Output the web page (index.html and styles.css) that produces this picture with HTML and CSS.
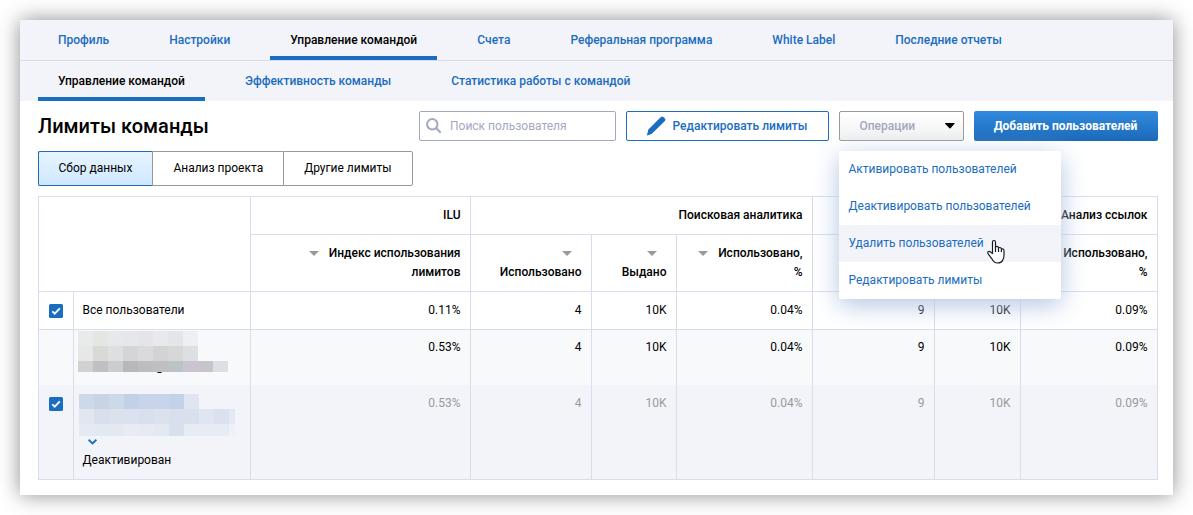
FILE: index.html
```html
<!DOCTYPE html>
<html lang="ru">
<head>
<meta charset="utf-8">
<title>Лимиты команды</title>
<link rel="stylesheet" href="styles.css">
</head>
<body>
<main class="card">
  <nav class="tabs tabs-main">
    <a class="tab">Профиль</a><a class="tab">Настройки</a><a class="tab active">Управление командой</a><a class="tab">Счета</a><a class="tab">Реферальная программа</a><a class="tab">White Label</a><a class="tab">Последние отчеты</a>
  </nav>
  <nav class="tabs tabs-sub">
    <a class="tab active">Управление командой</a><a class="tab">Эффективность команды</a><a class="tab">Статистика работы с командой</a>
  </nav>
  <section class="content">
    <header class="toolbar">
      <h1 class="title">Лимиты команды</h1>
      <div class="search">
        <svg class="search-icon" width="16" height="16" viewBox="0 0 16 16"><circle cx="6.3" cy="6.3" r="5.2"/><path d="M10 10l4.7 4.7"/></svg>
        <span>Поиск пользователя</span>
      </div>
      <div class="btn btn-outline">
        <svg class="pencil" width="20" height="20" viewBox="0 0 20 20"><path d="M.8 19.4L2.4 13.600 12.400 3.600 15 1Q16.200.1 17.400 1L19 2.600Q19.900 3.800 18.900 5L16.400 7.600 6.300 17.200Q3.500 18.900.8 19.400z"/></svg>
        <span>Редактировать лимиты</span>
      </div>
      <div class="dropdown">
        <div class="btn btn-select"><span>Операции</span><svg width="10" height="6" viewBox="0 0 10 6"><path d="M0 .5Q0 0 .5 0H9.500Q10 0 9.700.6L5.500 5.200Q5 5.600 4.500 5.200L.3.9z"/></svg></div>
        <div class="menu">
          <div class="menu-item">Активировать пользователей</div>
          <div class="menu-item">Деактивировать пользователей</div>
          <div class="menu-item hover">Удалить пользователей</div>
          <div class="menu-item">Редактировать лимиты</div>
          <svg class="cursor" width="20" height="25" viewBox="0 0 20 25"><path d="M6.500 14.500V3.200Q6.500 1.500 8 1.500T9.500 3.200V8.500Q9.700 7.300 11 7.300T12.500 8.800V9.400Q12.900 8.400 14 8.500T15.400 10V10.600Q15.800 9.700 16.800 9.900T18 11.500V16.500Q18 19 16.900 20.500 16 24 11.500 24 8 24 5.900 19.800L2.200 14.900Q1.200 13.400 2.200 12.600T4.600 13z"/><path d="M9.500 8.500V13M12.500 9.500V13M15.400 10.500V13"/></svg>
        </div>
      </div>
      <div class="btn btn-primary">Добавить пользователей</div>
    </header>
    <div class="segments">
      <div class="segment selected">Сбор данных</div><div class="segment">Анализ проекта</div><div class="segment">Другие лимиты</div>
    </div>
    <table class="limits">
      <colgroup><col class="c-check"><col class="c-user"><col class="c-ilu"><col class="c-a1"><col class="c-a2"><col class="c-a3"><col class="c-b1"><col class="c-b2"><col class="c-b3"></colgroup>
      <thead>
        <tr class="groups"><th colspan="2" rowspan="2"></th><th>ILU</th><th colspan="3">Поисковая аналитика</th><th colspan="3">Анализ ссылок</th></tr>
        <tr class="heads">
          <th><i class="sort"></i>Индекс использования лимитов</th>
          <th><i class="sort"></i><br>Использовано</th>
          <th><i class="sort"></i><br>Выдано</th>
          <th><i class="sort"></i>Использовано,<br>%</th>
          <th></th>
          <th></th>
          <th><i class="sort"></i>Использовано,<br>%</th>
        </tr>
      </thead>
      <tbody>
        <tr class="row-all">
          <td class="check"><svg class="box" width="14" height="14" viewBox="0 0 14 14"><rect width="14" height="14" rx="1.500"/><path d="M3.300 7.300L5.700 9.700 10.800 4.300"/></svg></td>
          <td class="user">Все пользователи</td><td>0.11%</td><td>4</td><td>10K</td><td>0.04%</td><td>9</td><td>10K</td><td>0.09%</td>
        </tr>
        <tr class="row-user">
          <td class="check"></td>
          <td class="user masked"><svg width="150" height="43" viewBox="0 0 150 43" shape-rendering="crispEdges">
            <path fill="#e9eaeb" d="M0 0h15v15H0z"/><path fill="#e4e6e4" d="M15 0h15v15H15z"/><path fill="#e7e8ec" d="M30 0h15v15H30z"/><path fill="#e6e7e8" d="M45 0h15v15H45z"/><path fill="#e5e5e7" d="M60 0h15v15H60z"/><path fill="#e8e9ed" d="M75 0h15v15H75z"/><path fill="#e4e5e9" d="M90 0h15v15H90z"/><path fill="#eeeff1" d="M105 0h15v15h-15z"/>
            <path fill="#e6e8e7" d="M0 15h15v15H0z"/><path fill="#d8dad6" d="M15 15h15v15H15z"/><path fill="#dfdee1" d="M30 15h15v15H30z"/><path fill="#d4d5d8" d="M45 15h15v15H45z"/><path fill="#dadadd" d="M60 15h15v15H60z"/><path fill="#d3d3d6" d="M75 15h15v15H75z"/><path fill="#d7d7d7" d="M90 15h15v15H90z"/><path fill="#dce0e3" d="M105 15h15v15h-15z"/>
            <path fill="#d1d2cf" d="M0 30h15v11H0z"/><path fill="#c1bec4" d="M15 30h15v11H15z"/><path fill="#cacece" d="M30 30h15v11H30z"/><path fill="#b8b7bc" d="M45 30h15v11H45z"/><path fill="#bcbdbf" d="M60 30h15v11H60z"/><path fill="#c0c0c2" d="M75 30h15v11H75z"/><path fill="#bcc3c5" d="M90 30h15v11H90z"/><path fill="#cbc3cf" d="M105 30h15v11h-15z"/><path fill="#c6c6ca" d="M120 30h15v11h-15z"/><path fill="#dbe0e4" d="M135 30h15v11h-15z"/>
            <path fill="#8b6f60" d="M79 41h5v1h-5z"/><path fill="#111" d="M80 41h3v1h-3z"/></svg></td>
          <td>0.53%</td><td>4</td><td>10K</td><td>0.04%</td><td>9</td><td>10K</td><td>0.09%</td>
        </tr>
        <tr class="row-off">
          <td class="check"><svg class="box" width="14" height="14" viewBox="0 0 14 14"><rect width="14" height="14" rx="1.500"/><path d="M3.300 7.300L5.700 9.700 10.800 4.300"/></svg></td>
          <td class="user masked"><svg width="156" height="42" viewBox="0 0 156 42" shape-rendering="crispEdges">
            <path fill="#cdd8e9" d="M0 0h15v15H0z"/><path fill="#c8d3e5" d="M15 0h15v15H15z"/><path fill="#ccd9e9" d="M30 0h15v15H30z"/><path fill="#c1d2e8" d="M45 0h15v15H45z"/><path fill="#c8d5e8" d="M60 0h15v15H60z"/><path fill="#c6d5eb" d="M75 0h15v15H75z"/><path fill="#c2d2e8" d="M90 0h15v15H90z"/><path fill="#dfe6f1" d="M105 0h15v15h-15z"/>
            <path fill="#e1e6f1" d="M0 15h15v15H0z"/><path fill="#d9e0ec" d="M15 15h15v15H15z"/><path fill="#dbe1ed" d="M30 15h30v15H30z"/><path fill="#d8e0ed" d="M60 15h15v15H60z"/><path fill="#dbe2ee" d="M75 15h15v15H75z"/><path fill="#d8dfed" d="M90 15h30v15H90z"/><path fill="#dfe5f1" d="M120 15h15v15h-15z"/><path fill="#dbe1ee" d="M135 15h15v15h-15z"/><path fill="#e3e9f4" d="M150 15h6v15h-6z"/>
            <path fill="#e5eaf2" d="M0 30h15v12H0z"/><path fill="#e2e9f2" d="M15 30h15v12H15z"/><path fill="#e3e8f1" d="M30 30h15v12H30z"/><path fill="#e8ebf4" d="M45 30h15v12H45z"/><path fill="#e6eaf3" d="M60 30h15v12H60z"/><path fill="#e4e8f1" d="M75 30h15v12H75z"/><path fill="#d8e0ee" d="M90 30h15v12H90z"/><path fill="#e6ebf4" d="M105 30h45v12h-45z"/><path fill="#edf1f9" d="M150 30h6v12h-6z"/></svg>
            <svg class="chevron" width="9" height="6" viewBox="0 0 9 6"><path d="M.6.8L4.500 4.500 8.400.8"/></svg>
            <div class="status">Деактивирован</div></td>
          <td>0.53%</td><td>4</td><td>10K</td><td>0.04%</td><td>9</td><td>10K</td><td>0.09%</td>
        </tr>
      </tbody>
    </table>
  </section>
</main>
</body>
</html>
```

FILE: styles.css
```css
* { box-sizing: border-box; }
body { margin: 0; padding: 20px; background: #fff; color: #000; font: 12px/19px Roboto, sans-serif; overflow: hidden; }
svg { display: block; flex: none; }
.card { width: 1153px; height: 475px; background: #fff; box-shadow: 0 0 20px rgba(0, 0, 0, .45); }

.tabs { display: flex; gap: 20px; height: 40px; padding-left: 18px; background: #f3f4f9; }
.tabs-main { height: 41px; border-bottom: 1px solid #d8dcec; }
.tab { padding: 0 20px; line-height: 40px; font-weight: 500; color: #1b6dc1; white-space: nowrap; }
.tab.active { color: #000; box-shadow: inset 0 -4px #1b6dc1; }

.content { padding: 10px 15px 0 18px; }
.toolbar { display: flex; gap: 10px; height: 30px; }
.title { flex: 1; margin: 0; font-size: 20px; line-height: 30px; font-weight: 500; }
.search { display: flex; align-items: center; gap: 8px; width: 197px; padding-left: 6px; border: 1px solid #a3a7bf; border-radius: 2px; color: #a3a7bf; }
.search-icon { fill: none; stroke: #a3a7bf; stroke-width: 2; }
.btn { display: flex; align-items: center; height: 30px; border-radius: 2px; font-weight: 500; white-space: nowrap; }
.btn-outline { width: 203px; padding-left: 19px; gap: 6.500px; border: 1px solid #1b6dc1; color: #1b6dc1; }
.pencil { fill: #1b6dc1; }
.btn-select { width: 125px; justify-content: space-between; padding: 0 8px 0 19.500px; border: 1px solid #999; color: #a3a7bf; background: linear-gradient(#fff, #f0f0f0); }
.btn-primary { width: 184px; justify-content: center; padding-right: 1px; color: #fff; font-weight: 700; background: linear-gradient(#318ade, #1b69b9); }

.dropdown { position: relative; }
.menu { position: absolute; z-index: 2; top: 40px; left: 0; width: 222px; border-radius: 2px; background: #fff; box-shadow: 0 6px 26px #b3c4e2; }
.menu-item { height: 37px; padding-left: 9.500px; line-height: 36px; color: #1b6dc1; }
.menu-item.hover { background: #f3f4f9; }
.cursor { position: absolute; left: 147px; top: 88px; fill: #fff; stroke: #1b1b2b; stroke-width: 1.200; stroke-linejoin: round; }

.segments { display: flex; height: 35px; margin: 10px 0; }
.segment { padding: 0 20px; border: 1px solid #999; border-right-width: 0; line-height: 33px; }
.segment:last-child { border-right-width: 1px; border-radius: 0 2px 2px 0; }
.segment.selected { padding: 0 20px 0 19.500px; border-color: #1b6dc1; border-radius: 2px 0 0 2px; background: linear-gradient(#e7f4ff, #cfe8ff); }

.limits { width: 1120px; table-layout: fixed; border-collapse: separate; border-spacing: 0; border: solid #d8dcec; border-width: 0 1px 1px 0; }
.c-check { width: 35px; }
.c-user { width: 177px; }
.c-ilu { width: 220px; }
.c-a1 { width: 121px; }
.c-a2 { width: 85px; }
.c-a3 { width: 136px; }
.c-b1 { width: 122px; }
.c-b2 { width: 86px; }
.c-b3 { width: 137px; }
.limits th, .limits td { padding: 9px 9.500px 0 8px; border: solid #d8dcec; border-width: 1px 0 0 1px; text-align: right; vertical-align: top; }
.limits th { font-weight: 500; }
.groups { height: 38px; }
.heads { height: 57px; }
.sort { display: inline-block; margin-right: 10px; border: solid transparent; border-width: 5px 5px 0; border-top-color: #999; vertical-align: 1px; }
.row-all { height: 38px; }
.row-user { height: 56px; background: #f8f9fb; }
.row-off { height: 94px; background: #f3f4f9; color: #999; }
.limits .row-user td { padding-top: 8px; }
.limits .row-off td { padding-top: 8px; border-top-color: #f3f4f9; }
.limits td.user { padding-left: 8.500px; text-align: left; }
.limits .row-user td.masked { padding: 1px 0 0 4px; }
.limits .row-off td.masked { padding: 8px 0 0 5px; }
.limits .check { padding-left: 10px; }
.limits .row-all .check { padding-top: 12px; }
.limits .row-off .check { padding-top: 11px; }
.box rect { fill: #1b6dc1; }
.box path { fill: none; stroke: #fff; stroke-width: 1.800; }
.chevron { margin: 3px 0 0 9px; fill: none; stroke: #1b6dc1; stroke-width: 1.900; }
.status { margin: 6px 0 0 3.500px; color: #000; }
```
